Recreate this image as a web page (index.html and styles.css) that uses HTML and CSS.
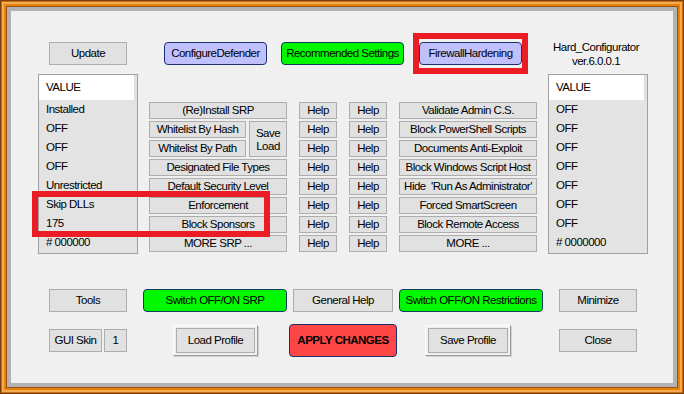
FILE: index.html
```html
<!DOCTYPE html>
<html lang="en">

<head>
    <meta charset="UTF-8" />
    <meta name="viewport" content="width=device-width, initial-scale=1.0" />
    <title>Hard_Configurator</title>
    <link rel="stylesheet" href="styles.css">
</head>

<body>

    <div class="frame">
        <div class="window">

            <div class="top-row">
                <button class="btn btn--update">Update</button>
                <button class="btn btn--blue btn--defender">ConfigureDefender</button>
                <button class="btn btn--green btn--recommended">Recommended Settings</button>
                <button class="btn btn--blue btn--firewall">FirewallHardening<span class="mark mark--firewall"></span></button>
                <div class="title">Hard_Configurator<br>ver.6.0.0.1</div>
            </div>

            <div class="middle">
                <div class="list list--left">
                    <div class="list__head">VALUE</div>
                    <div class="list__row">Installed</div>
                    <div class="list__row">OFF</div>
                    <div class="list__row">OFF</div>
                    <div class="list__row">OFF</div>
                    <div class="list__row">Unrestricted</div>
                    <div class="list__row">Skip DLLs</div>
                    <div class="list__row">175</div>
                    <div class="list__row"># 000000</div>
                </div>

                <div class="srp">
                    <button class="btn btn--row span2">(Re)Install SRP</button>
                    <button class="btn btn--row">Whitelist By Hash</button>
                    <button class="btn btn--row save-load">Save<br>Load</button>
                    <button class="btn btn--row">Whitelist By Path</button>
                    <button class="btn btn--row span2">Designated File Types</button>
                    <button class="btn btn--row span2">Default Security Level</button>
                    <button class="btn btn--row span2">Enforcement</button>
                    <button class="btn btn--row span2">Block Sponsors</button>
                    <button class="btn btn--row span2">MORE SRP ...</button>
                </div>

                <div class="col col--help">
                    <button class="btn btn--row">Help</button>
                    <button class="btn btn--row">Help</button>
                    <button class="btn btn--row">Help</button>
                    <button class="btn btn--row">Help</button>
                    <button class="btn btn--row">Help</button>
                    <button class="btn btn--row">Help</button>
                    <button class="btn btn--row">Help</button>
                    <button class="btn btn--row">Help</button>
                </div>

                <div class="col col--help">
                    <button class="btn btn--row">Help</button>
                    <button class="btn btn--row">Help</button>
                    <button class="btn btn--row">Help</button>
                    <button class="btn btn--row">Help</button>
                    <button class="btn btn--row">Help</button>
                    <button class="btn btn--row">Help</button>
                    <button class="btn btn--row">Help</button>
                    <button class="btn btn--row">Help</button>
                </div>

                <div class="col col--right">
                    <button class="btn btn--row">Validate Admin C.S.</button>
                    <button class="btn btn--row">Block PowerShell Scripts</button>
                    <button class="btn btn--row">Documents Anti-Exploit</button>
                    <button class="btn btn--row">Block Windows Script Host</button>
                    <button class="btn btn--row">Hide &nbsp;'Run As Administrator'</button>
                    <button class="btn btn--row">Forced SmartScreen</button>
                    <button class="btn btn--row">Block Remote Access</button>
                    <button class="btn btn--row">MORE ...</button>
                </div>

                <div class="list list--right">
                    <div class="list__head">VALUE</div>
                    <div class="list__row">OFF</div>
                    <div class="list__row">OFF</div>
                    <div class="list__row">OFF</div>
                    <div class="list__row">OFF</div>
                    <div class="list__row">OFF</div>
                    <div class="list__row">OFF</div>
                    <div class="list__row">OFF</div>
                    <div class="list__row"># 0000000</div>
                </div>

                <span class="mark mark--srp"></span>
            </div>

            <div class="bottom-row bottom-row--first">
                <button class="btn btn--tools">Tools</button>
                <button class="btn btn--green btn--switch-srp">Switch OFF/ON SRP</button>
                <button class="btn btn--general">General Help</button>
                <button class="btn btn--green btn--switch-res">Switch OFF/ON Restrictions</button>
                <button class="btn btn--minimize">Minimize</button>
            </div>

            <div class="bottom-row bottom-row--second">
                <button class="btn btn--skin">GUI Skin</button>
                <button class="btn btn--skin-num">1</button>
                <div class="raised raised--load"><button class="btn btn--face">Load Profile</button></div>
                <button class="btn btn--apply">APPLY CHANGES</button>
                <div class="raised raised--save"><button class="btn btn--face">Save Profile</button></div>
                <button class="btn btn--close">Close</button>
            </div>

        </div>
    </div>

</body>

</html>
```

FILE: styles.css
```css
body {
    margin: 0;
    font-family: "Liberation Sans", Arial, sans-serif;
    font-size: 11.5px;
    letter-spacing: -0.5px;
    color: #000;
}

.frame {
    width: 684px;
    height: 394px;
    box-sizing: border-box;
    padding: 7px;
    background: #e47f10;
    box-shadow: inset 0 0 0 1px #7a3e0c, inset 0 0 0 2px #c86a0e, inset 0 0 0 4px #f6ac4c, inset 0 0 0 6px #e3820f, inset 0 0 0 7px #9a5010;
}

.window {
    height: 100%;
    box-sizing: border-box;
    border: 4px solid #b2b2b2;
    background: #f0f0f0;
}

.btn {
    position: relative;
    font: inherit;
    letter-spacing: inherit;
    color: #000;
    background: #e1e1e1;
    border: 1px solid #adadad;
    margin: 0;
    padding: 0;
    height: 23px;
    box-sizing: border-box;
    white-space: nowrap;
    text-align: center;
    line-height: 1;
}

.btn--blue {
    background: #c0c0fc;
    border-color: #1c2f6e;
    border-radius: 4px;
}

.btn--green {
    background: #00f800;
    border-color: #123c60;
    border-radius: 4px;
}

/* red highlight frames */
.mark {
    position: absolute;
    border: 6px solid #ec1c24;
    box-sizing: border-box;
    pointer-events: none;
}

.mark--firewall {
    left: -7px;
    top: -10px;
    width: 115px;
    height: 41px;
}

.mark--srp {
    left: 21px;
    top: 117px;
    width: 238px;
    height: 46px;
}

/* top row */
.top-row {
    display: flex;
    align-items: flex-start;
    margin-top: 31px;
    height: 23px;
}

.btn--update {
    margin-left: 38px;
    width: 78px;
}

.btn--defender {
    margin-left: 37px;
    width: 103px;
}

.btn--recommended {
    margin-left: 14px;
    width: 123px;
}

.btn--firewall {
    margin-left: 15px;
    width: 103px;
}

.title {
    margin-left: 24px;
    margin-top: -2px;
    width: 100px;
    text-align: center;
    line-height: 14px;
}

/* middle block */
.middle {
    position: relative;
    display: flex;
    align-items: flex-start;
    margin-top: 9px;
    height: 180px;
}

.list {
    width: 100px;
    height: 180px;
    box-sizing: border-box;
    border: 1px solid #a0a0a0;
    background: #e3e3e3;
}

.list--left {
    margin-left: 27px;
}

.list--right {
    margin-left: 11px;
}

.list__head {
    height: 25px;
    line-height: 25px;
    padding-left: 7px;
    margin-right: 2px;
    background: #fff;
    border-right: 1px solid #dadada;
}

.list__row {
    height: 19px;
    line-height: 19px;
    padding-left: 7px;
}

.srp {
    display: grid;
    grid-template-columns: 97px 38px;
    grid-auto-rows: 17px;
    gap: 2px 3px;
    width: 138px;
    margin-left: 11px;
    margin-top: 28px;
}

.btn--row {
    height: 17px;
    padding: 0 2px;
}

.span2 {
    grid-column: span 2;
}

.save-load {
    grid-row: span 2;
    height: auto;
    line-height: 13px;
    padding-top: 1px;
}

.col {
    display: flex;
    flex-direction: column;
    gap: 2px;
    margin-top: 28px;
    margin-left: 12px;
}

.col--help {
    width: 38px;
}

.col--right {
    width: 138px;
}

/* bottom rows */
.bottom-row {
    display: flex;
    align-items: center;
}

.bottom-row--first {
    margin-top: 35px;
    height: 23px;
}

.bottom-row--second {
    margin-top: 12px;
    height: 33px;
}

.btn--tools {
    margin-left: 38px;
    width: 78px;
}

.btn--switch-srp {
    margin-left: 16px;
    width: 144px;
}

.btn--general {
    margin-left: 6px;
    width: 100px;
}

.btn--switch-res {
    margin-left: 6px;
    width: 144px;
}

.btn--minimize {
    margin-left: 16px;
    width: 78px;
}

.btn--skin {
    margin-left: 38px;
    width: 53px;
}

.btn--skin-num {
    margin-left: 2px;
    width: 23px;
}

.raised {
    height: 31px;
    box-sizing: border-box;
    padding: 2px;
    background: #f0f0f0;
    border: 1px solid;
    border-color: #ffffff #9c9c9c #9c9c9c #ffffff;
    box-shadow: 1px 1px 0 #d0d0d0;
}

.raised--load {
    margin-left: 46px;
    width: 85px;
}

.raised--save {
    margin-left: 28px;
    width: 86px;
}

.btn--face {
    width: 100%;
    height: 100%;
}

.btn--apply {
    margin-left: 31px;
    width: 108px;
    height: 33px;
    background: #ff4646;
    border-color: #1c2f6e;
    border-radius: 4px;
    font-weight: bold;
}

.btn--close {
    margin-left: 48px;
    width: 78px;
}
```
